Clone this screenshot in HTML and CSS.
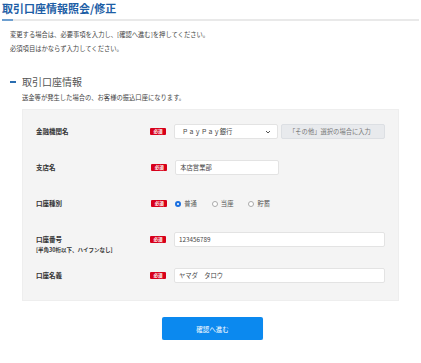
FILE: index.html
```html
<!DOCTYPE html>
<html lang="ja">
<head>
    <meta charset="UTF-8">
    <title>取引口座情報照会/修正</title>
    <link rel="stylesheet" href="styles.css">
</head>
<body>
<div class="page">
    <h1 class="page__title">取引口座情報照会/修正</h1>
    <p class="page__lead">変更する場合は、必要事項を入力し、[確認へ進む]を押してください。<br>必須項目はかならず入力してください。</p>

    <h2 class="section__title">取引口座情報</h2>
    <p class="section__note">送金等が発生した場合の、お客様の振込口座になります。</p>

    <div class="form">
        <div class="form__row">
            <div class="form__label">金融機関名</div>
            <span class="badge">必須</span>
            <div class="form__control form__control--pair">
                <div class="select">
                    <span>ＰａｙＰａｙ銀行</span>
                    <svg width="6" height="4" viewBox="0 0 6 4"><path d="M1 1 L3 3 L5 1" fill="none" stroke="#555" stroke-width="1"/></svg>
                </div>
                <input class="input input--disabled" type="text" placeholder="「その他」選択の場合に入力" disabled>
            </div>
        </div>
        <div class="form__row">
            <div class="form__label">支店名</div>
            <span class="badge">必須</span>
            <div class="form__control form__control--pair">
                <input class="input" type="text" value="本店営業部">
            </div>
        </div>
        <div class="form__row">
            <div class="form__label">口座種別</div>
            <span class="badge">必須</span>
            <div class="form__control form__control--radios">
                <label class="radio"><span class="radio__mark radio__mark--on"></span>普通</label>
                <label class="radio"><span class="radio__mark"></span>当座</label>
                <label class="radio"><span class="radio__mark"></span>貯蓄</label>
            </div>
        </div>
        <div class="form__row">
            <div class="form__label">口座番号<small class="form__hint">[半角30桁以下、ハイフンなし]</small></div>
            <span class="badge">必須</span>
            <div class="form__control">
                <input class="input input--wide" type="text" value="123456789">
            </div>
        </div>
        <div class="form__row">
            <div class="form__label">口座名義</div>
            <span class="badge">必須</span>
            <div class="form__control">
                <input class="input input--wide" type="text" value="ヤマダ　タロウ">
            </div>
        </div>
    </div>

    <div class="actions">
        <button class="button" type="button">確認へ進む</button>
    </div>
</div>
</body>
</html>
```

FILE: styles.css
```css
html,
body {
    margin: 0;
    padding: 0;
    background: #fff;
}

.page {
    padding: 0 2px;
    font-family: "Noto Sans CJK JP", "Noto Sans", sans-serif;
    color: #333;
}

.page__title {
    position: relative;
    margin: 0;
    padding-bottom: 3px;
    border-bottom: 2px solid #e9e9e9;
    color: #1d5ea6;
    font-size: 11px;
    line-height: 16px;
    font-weight: 700;
}

.page__title::after {
    content: "";
    position: absolute;
    left: 0;
    bottom: -2px;
    width: 11px;
    height: 2px;
    background: #6d9fd0;
}

.page__lead {
    margin: 7px 0 0;
    padding-left: 8px;
    font-size: 6.3px;
    line-height: 14px;
    color: #444;
}

.section__title {
    display: flex;
    align-items: center;
    margin: 19px 0 0;
    padding-left: 8px;
    font-size: 10px;
    line-height: 14px;
    font-weight: 400;
    color: #555;
}

.section__title::before {
    content: "";
    width: 6px;
    height: 2px;
    margin-right: 6px;
    background: #2a6db0;
}

.section__note {
    margin: 3px 0 0;
    padding-left: 20px;
    font-size: 6.3px;
    line-height: 12px;
    color: #444;
}

.form {
    margin: 5px 20px 0 20px;
    padding: 3px 13px 7px;
    background: #f4f4f4;
    border: 1px solid #eee;
}

.form__row {
    display: flex;
    align-items: flex-start;
    height: 36px;
    padding-top: 11px;
    box-sizing: border-box;
}

.form__label {
    display: flex;
    flex-direction: column;
    width: 116px;
    font-size: 6.5px;
    line-height: 15px;
    font-weight: 700;
    color: #333;
}

.form__hint {
    font-size: 5.5px;
    line-height: 6px;
    font-weight: 700;
}

.badge {
    width: 16px;
    height: 7px;
    margin-top: 4px;
    margin-right: 8px;
    border-radius: 1px;
    background: #d7001a;
    color: #fff;
    font-size: 4.6px;
    line-height: 7px;
    font-weight: 700;
    text-align: center;
}

.form__control {
    display: flex;
    width: 211px;
}

.form__control--pair {
    gap: 3px;
}

.select {
    display: flex;
    align-items: center;
    justify-content: space-between;
    box-sizing: border-box;
    width: 104px;
    height: 15px;
    padding: 0 6px 0 7px;
    background: #fff;
    border: 1px solid #e3e3e3;
    border-radius: 2px;
    font-size: 6.3px;
    color: #444;
}

.input {
    box-sizing: border-box;
    width: 104px;
    height: 15px;
    margin: 0;
    padding: 0 4px;
    background: #fff;
    border: 1px solid #e3e3e3;
    border-radius: 2px;
    font-family: inherit;
    font-size: 6.3px;
    color: #444;
    outline: none;
}

.input--disabled {
    padding-left: 7px;
    background: #e8eaed;
    border-color: #dcdfe3;
}

.input--disabled::placeholder {
    color: #777;
}

.input--wide {
    width: 211px;
}

.form__control--radios {
    align-items: center;
    height: 15px;
    gap: 15px;
}

.radio {
    display: flex;
    align-items: center;
    gap: 3px;
    font-size: 6.3px;
    color: #555;
}

.radio__mark {
    box-sizing: border-box;
    width: 6px;
    height: 6px;
    border: 1px solid #aaa;
    border-radius: 50%;
    background: #fff;
}

.radio__mark--on {
    border: 2px solid #1a6fe0;
}

.actions {
    display: flex;
    justify-content: center;
    padding: 16px 0 0 4px;
}

.button {
    width: 101px;
    height: 23px;
    border: 0;
    border-radius: 2px;
    background: #0b89ef;
    color: #fff;
    font-family: inherit;
    font-size: 6.5px;
    font-weight: 400;
    box-shadow: 0 1px 1px rgba(0, 0, 0, .15);
}
```
